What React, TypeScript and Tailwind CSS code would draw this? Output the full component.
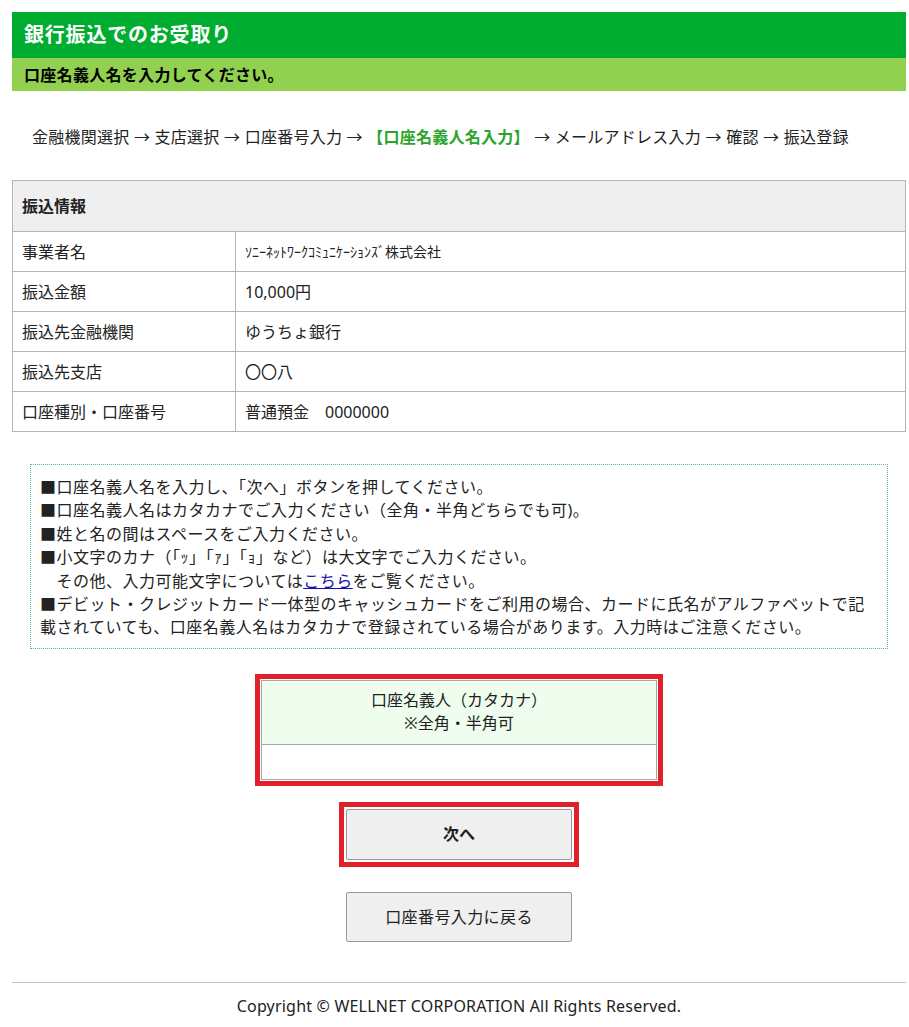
export default function App() {
  const rows = [
    { label: "事業者名", value: "ｿﾆｰﾈｯﾄﾜｰｸｺﾐｭﾆｹｰｼｮﾝｽﾞ株式会社", small: true },
    { label: "振込金額", value: "10,000円" },
    { label: "振込先金融機関", value: "ゆうちょ銀行" },
    { label: "振込先支店", value: "〇〇八" },
    { label: "口座種別・口座番号", value: "普通預金　0000000" },
  ];

  return (
    <div className="min-h-screen bg-white text-[#222] font-['Noto_Sans','Noto_Sans_CJK_JP',sans-serif] text-[16px]">
      <div className="ml-3 pt-3 w-[894px]">
        <div className="bg-[#00ad31] h-[46px] px-[12px] flex items-center">
          <h1 className="text-white text-[20px] font-bold tracking-[0.8px]">銀行振込でのお受取り</h1>
        </div>
        <div className="bg-[#92d050] h-[33px] px-[12px] flex items-center">
          <p className="text-[16px] font-bold text-black tracking-[0.3px]">口座名義人名を入力してください。</p>
        </div>

        <p className="mt-[34px] pl-[20px] text-[16px] leading-6 tracking-[0.25px]">
          金融機関選択 → 支店選択 → 口座番号入力 →{" "}
          <span className="text-[#2aa52a] font-bold">【口座名義人名入力】</span> → メールアドレス入力 → 確認 → 振込登録
        </p>

        <table className="mt-[31px] w-full border-collapse border border-[#b5b5b5] text-[16px]">
          <thead>
            <tr className="bg-[#efefef] h-[51px]">
              <th colSpan={2} className="text-left font-bold px-[9px] border border-[#b5b5b5]">
                振込情報
              </th>
            </tr>
          </thead>
          <tbody>
            {rows.map((r, i) => (
              <tr key={i} className="h-[40px]">
                <td className="w-[223px] px-[9px] border border-[#b5b5b5]">{r.label}</td>
                <td className={`px-[9px] border border-[#b5b5b5] ${r.small ? "text-[14px]" : ""}`}>{r.value}</td>
              </tr>
            ))}
          </tbody>
        </table>

        <div className="mx-[18px] mt-[32px] border border-dotted border-[#5fb875] px-[9px] pt-[11px] pb-[8px] text-[16px] leading-[23.4px] tracking-[0.5px]">
          <p>■口座名義人名を入力し、「次へ」ボタンを押してください。</p>
          <p>■口座名義人名はカタカナでご入力ください（全角・半角どちらでも可)。</p>
          <p>■姓と名の間はスペースをご入力ください。</p>
          <p>■小文字のカナ（｢ｯ｣「ｧ」「ｮ」など）は大文字でご入力ください。</p>
          <p>
            {"\u3000"}その他、入力可能文字については
            <a href="#" className="text-[#1a0dab] underline">こちら</a>
            をご覧ください。
          </p>
          <p>
            ■デビット・クレジットカード一体型のキャッシュカードをご利用の場合、カードに氏名がアルファベットで記載されていても、口座名義人名はカタカナで登録されている場合があります。入力時はご注意ください。
          </p>
        </div>

        <div className="flex flex-col items-center">
          <div className="mt-[25px] w-[408px] border-[5px] border-[#e0202a] p-[1px]">
            <div className="border border-[#a8a8a8]">
              <div className="bg-[#effdee] h-[64px] flex flex-col items-center justify-center text-[16px] leading-[23px] border-b border-[#a8a8a8]">
                <span>口座名義人（カタカナ）</span>
                <span>※全角・半角可</span>
              </div>
              <input className="block w-full h-[34px] bg-white outline-none px-2" />
            </div>
          </div>

          <div className="mt-[16px] w-[240px] border-[5px] border-[#e0202a] p-[2px]">
            <button className="w-full h-[51px] bg-[#efefef] border border-[#9a9a9a] rounded-[2px] font-bold text-[16px]">
              次へ
            </button>
          </div>

          <button className="mt-[25px] w-[226px] h-[50px] bg-[#efefef] border border-[#9a9a9a] rounded-[2px] text-[16px] tracking-[0.4px]">
            口座番号入力に戻る
          </button>
        </div>

        <div className="mt-[40px] border-t border-[#c4c4c4]" />
        <p className="text-center pt-[11px] text-[16px] pb-4 tracking-[0.2px]">Copyright © WELLNET CORPORATION All Rights Reserved.</p>
      </div>
    </div>
  );
}
